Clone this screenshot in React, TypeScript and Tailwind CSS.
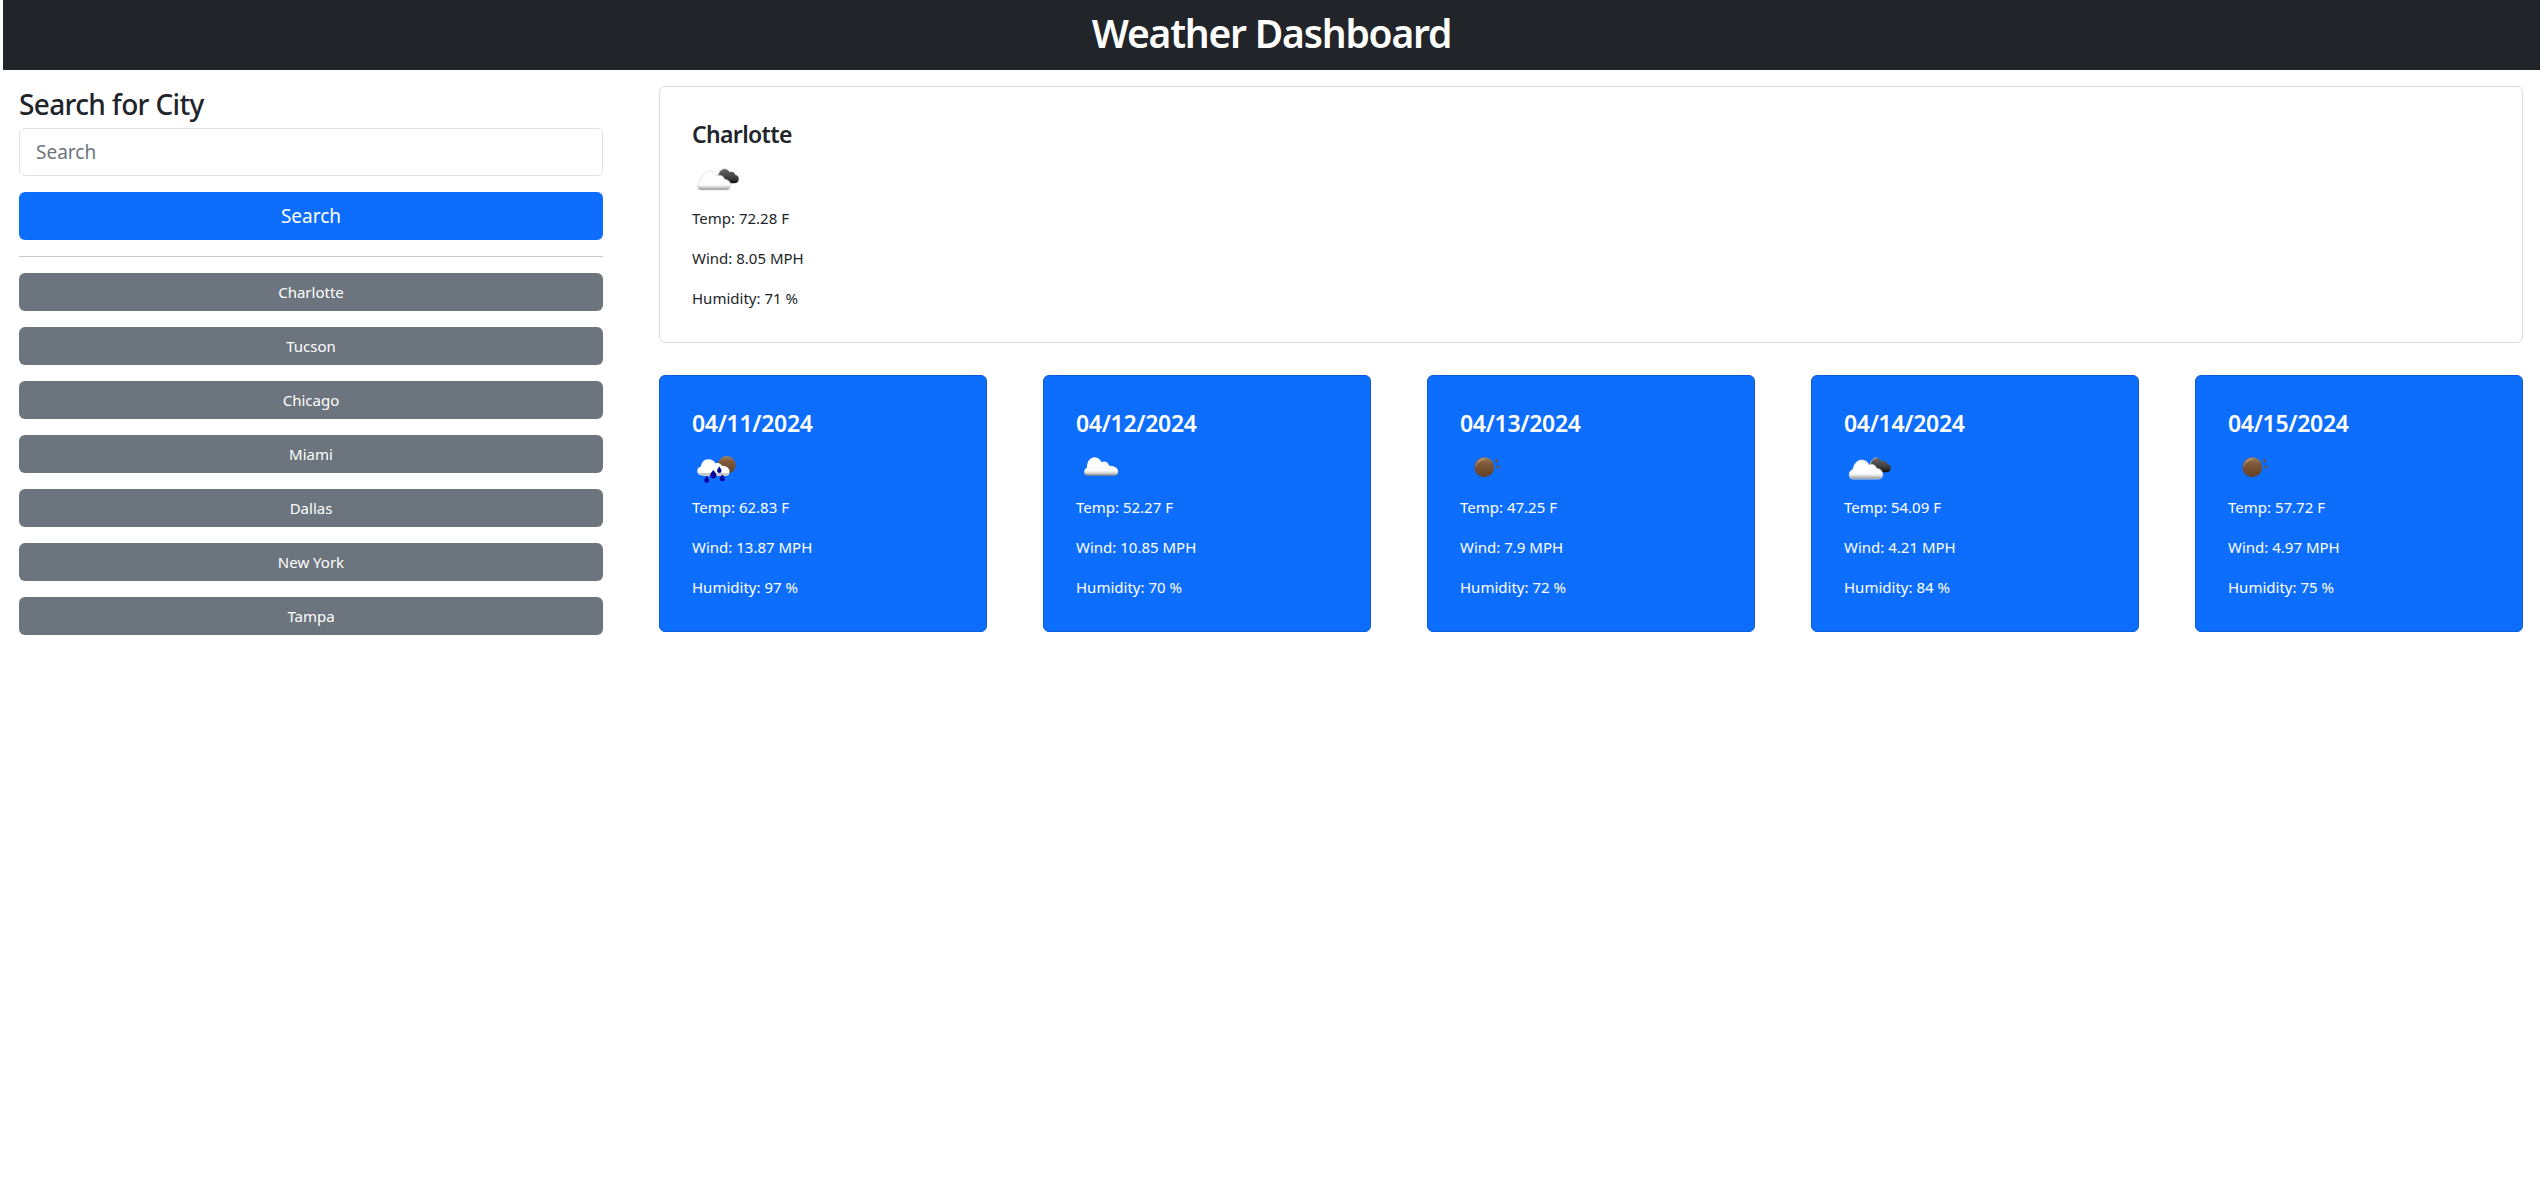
const cities = ["Charlotte", "Tucson", "Chicago", "Miami", "Dallas", "New York", "Tampa"];

type IconName = "rain" | "cloud" | "moon" | "broken";

interface forecast {
  date: string;
  icon: IconName;
  temp: string;
  wind: string;
  humidity: string;
}

const forecasts: forecast[] = [
  { date: "04/11/2024", icon: "rain", temp: "62.83", wind: "13.87", humidity: "97" },
  { date: "04/12/2024", icon: "cloud", temp: "52.27", wind: "10.85", humidity: "70" },
  { date: "04/13/2024", icon: "moon", temp: "47.25", wind: "7.9", humidity: "72" },
  { date: "04/14/2024", icon: "broken", temp: "54.09", wind: "4.21", humidity: "84" },
  { date: "04/15/2024", icon: "moon", temp: "57.72", wind: "4.97", humidity: "75" },
];

// owm style weather icons, 50x50 like the images they stand in for
function WeatherIcon({ name }: { name: IconName }) {
  return (
    <svg width="50" height="50" viewBox="0 0 50 50" className="block">
      <defs>
        <linearGradient id="whiteCloud" x1="0" y1="0" x2="0" y2="1">
          <stop offset="0" stopColor="#ffffff" />
          <stop offset="0.72" stopColor="#fcfcfc" />
          <stop offset="0.86" stopColor="#d2d2d2" />
          <stop offset="1" stopColor="#808080" />
        </linearGradient>
        <linearGradient id="darkCloud" x1="0" y1="0" x2="0" y2="1">
          <stop offset="0" stopColor="#666666" />
          <stop offset="0.7" stopColor="#383838" />
          <stop offset="1" stopColor="#0c0c0c" />
        </linearGradient>
        <linearGradient id="brownBall" x1="0" y1="0" x2="0" y2="1">
          <stop offset="0" stopColor="#a08464" />
          <stop offset="0.3" stopColor="#80593a" />
          <stop offset="1" stopColor="#603f24" />
        </linearGradient>
      </defs>
      {name === "moon" && (
        <>
          <circle cx="24.3" cy="22.3" r="10" fill="url(#brownBall)" />
          <path d="M16 22 A8.5 8.5 0 0 1 26 14 A10 10 0 0 0 16 22Z" fill="#d8c4ac" />
          <circle cx="36.7" cy="15.7" r="1.6" fill="#6f5044" />
          <circle cx="38.3" cy="22" r="1.6" fill="#6f5044" />
        </>
      )}
      {name === "cloud" && (
        <path
          d="M11.5 30.7 C8.5 30.7 8 28.5 8.3 26.3 C8.5 24 10 22.8 11 22.5 C10.8 17.5 13.5 12.3 18.5 12.3 C22 12.3 24.5 14.5 25.5 17.3 C28 15.8 32 16.5 33.2 20.8 C35 20.3 39 21 41 23.5 C43 26 42.5 30.7 38.5 30.7 Z"
          fill="url(#whiteCloud)"
        />
      )}
      {name === "broken" && (
        <>
          <path
            d="M28 27.3 C25 24 25 20 27 17 C28 14 31 12.3 34 13.2 C36 13.8 37 15 37.5 16 C40 15.2 43 16.5 43.5 19 C46 19.3 47 21 46.7 23.5 C46.5 26 45 27.3 42 27.3 Z"
            fill="url(#darkCloud)"
          />
          <path d="M26.5 19 C27 15.5 30 12.8 33.5 12.8" fill="none" stroke="#b5b5b5" strokeWidth="1" />
          <path
            d="M9 34 C6 34 5 31.5 5.3 29 C5.6 26.5 7 25 9 24.5 C9.5 19.5 13 15 17.5 15 C21 15 24 17 25 20 C28 18.5 32 20 32.5 23.5 C36 23.5 38.7 26 38.7 29.5 C38.7 32 37 34 34.5 34 Z"
            fill="url(#whiteCloud)"
            stroke="#dedede"
            strokeWidth="0.8"
          />
        </>
      )}
      {name === "rain" && (
        <>
          <circle cx="34.7" cy="20" r="9" fill="url(#brownBall)" />
          <path
            d="M9 30 C6.5 30 5.3 28 5.3 26 C5.3 23.5 7 22 9 21.5 C9.3 17 12.5 14.3 16.5 14.3 C20 14.3 22.5 16 23.5 18.5 C26 17.5 29 18.5 30 21 C31.5 20.5 35 21.5 36.5 23.5 C38.5 26 37.5 30 34 30 Z"
            fill="#ffffff"
          />
          <path d="M6 28 C8 31 12 31 14 31 L34 31 C36 31 37 30 37.5 28 Z" fill="#c8c8c8" />
          <path d="M27.3 21.5 C28.6 23.5 29.5 24.5 29.5 25.8 A2.2 2.2 0 0 1 25.1 25.8 C25.1 24.5 26 23.5 27.3 21.5Z" fill="#0000a0" />
          <path d="M21.3 25 C23 27.3 24.4 28.5 24.4 30.2 A3.1 3.1 0 0 1 18.2 30.2 C18.2 28.5 19.6 27.3 21.3 25Z" fill="#0000a0" />
          <path d="M14.7 31 C16 33 17.1 34 17.1 35.4 A2.4 2.4 0 0 1 12.3 35.4 C12.3 34 13.4 33 14.7 31Z" fill="#0000a0" />
          <path d="M30.3 29.5 C31.6 31.3 32.8 32.3 32.8 33.8 A2.5 2.5 0 0 1 27.8 33.8 C27.8 32.3 29 31.3 30.3 29.5Z" fill="#0000a0" />
        </>
      )}
    </svg>
  );
}

function WeatherStats({ temp, wind, humidity }: { temp: string; wind: string; humidity: string }) {
  return (
    <>
      <p className="mb-4 text-[15px] leading-6">Temp: {temp} F</p>
      <p className="mb-4 text-[15px] leading-6">Wind: {wind} MPH</p>
      <p className="mb-4 text-[15px] leading-6">Humidity: {humidity} %</p>
    </>
  );
}

export default function App() {
  return (
    <div className="min-h-screen bg-white ml-[3px] mr-[6px] font-['Noto_Sans',sans-serif] text-[#212529]">
      <header className="h-[70px] bg-[#212529] text-white flex items-center justify-center">
        <h1 className="text-[39px] leading-[48px] font-semibold tracking-[-1.2px] -mt-[5px]">Weather Dashboard</h1>
      </header>

      <div className="flex pl-4 pr-[17px]">
        {/* Search column */}
        <aside className="w-[584px] shrink-0 pt-[17px]">
          <h3 className="text-[28px] leading-[34px] font-medium mb-[7px] tracking-[-0.65px]">Search for City</h3>
          <input
            type="text"
            placeholder="Search"
            className="w-full h-12 px-4 text-[19px] bg-white border border-[#dee2e6] rounded-md outline-none placeholder:text-[#6c757d]"
          />
          <button className="w-full h-12 mt-4 bg-[#0d6efd] text-white text-[19px] rounded-md">Search</button>
          <hr className="mt-4 mb-4 border-t border-[#c9c9c9]" />
          <div className="flex flex-col gap-4">
            {cities.map((city) => (
              <button key={city} className="w-full h-[38px] bg-[#6c757d] text-white text-[15px] rounded-md">
                {city}
              </button>
            ))}
          </div>
        </aside>

        {/* Weather column */}
        <main className="flex-1 ml-14 pt-4">
          <div className="border border-[#dcdcdc] rounded-md px-8 pt-[33px] pb-4">
            <h4 className="text-[23px] leading-[29px] font-semibold mb-[7px] tracking-[-0.65px]">Charlotte</h4>
            <WeatherIcon name="broken" />
            <WeatherStats temp="72.28" wind="8.05" humidity="71" />
          </div>

          <div className="grid grid-cols-5 gap-14 mt-8">
            {forecasts.map((day) => (
              <div key={day.date} className="bg-[#0d6efd] text-white border border-[#0b5ed7] rounded-md px-8 pt-[33px] pb-4">
                <h4 className="text-[23px] leading-[29px] font-semibold mb-[7px] tracking-[-0.3px]">{day.date}</h4>
                <WeatherIcon name={day.icon} />
                <WeatherStats temp={day.temp} wind={day.wind} humidity={day.humidity} />
              </div>
            ))}
          </div>
        </main>
      </div>
    </div>
  );
}
